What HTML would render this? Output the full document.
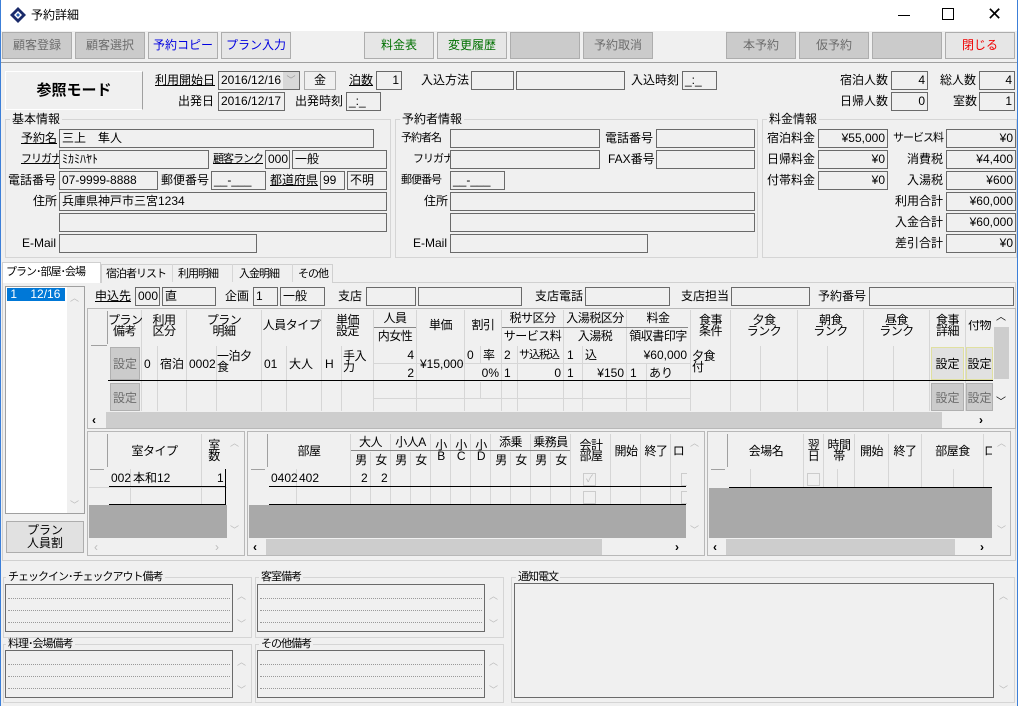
<!DOCTYPE html>
<html><head><meta charset="utf-8"><style>
*{margin:0;padding:0}
body{width:1018px;height:706px;background:#f0f0f0;position:relative;overflow:hidden;font-family:"Liberation Sans","Noto Sans CJK JP",sans-serif;font-size:12px;color:#000}
.a{position:absolute;white-space:nowrap;line-height:14px}
.i{position:absolute;box-sizing:border-box;border:1px solid #6a6a6a;background:#f0f0f0;height:19px;line-height:17px;padding:0 2px;font-size:12px;white-space:nowrap;overflow:hidden}
.r{text-align:right}
.u{text-decoration:underline}
.kn{font-size:11px;letter-spacing:-1px}
.btn{position:absolute;top:32px;height:27px;width:70px;box-sizing:border-box;border:1px solid #adadad;text-align:center;line-height:25px;font-size:12px}
.g{background:#cbcbcb;color:#6d6d6d}
.w{background:#e6e6e6}
.grp{position:absolute;box-sizing:border-box;border:1px solid #d5d5d5}
.gl{position:absolute;background:#f0f0f0;padding:0 2px;line-height:13px}
.v{position:absolute;width:1px;background:#d6d6d6}
.h{position:absolute;height:1px;background:#d6d6d6}
.k{position:absolute;height:2px;background:#000}
.t{position:absolute;text-align:center;line-height:11px;font-size:12px;white-space:nowrap;letter-spacing:-0.5px}
.set{position:absolute;box-sizing:border-box;border:1px solid #b0b0b0;background:#cbcbcb;color:#6d6d6d;text-align:center;line-height:32px}
.sb{position:absolute;background:#f0f0f0;color:#a0a0a0;text-align:center;font-size:10px}
.ta{position:absolute;box-sizing:border-box;border:1px solid #6a6a6a;background:#f0f0f0}
.dl{position:absolute;left:2px;right:2px;border-top:1px dotted #9a9a9a}
</style></head><body>
<div style="position:absolute;left:0;top:0;width:1018px;height:31px;background:#fff"></div>
<div style="position:absolute;left:0;top:0;width:1px;height:706px;background:#3c7fd8"></div>
<div style="position:absolute;left:1017px;top:0;width:1px;height:706px;background:#3c7fd8"></div>
<svg style="position:absolute;left:9px;top:6px" width="18" height="18" viewBox="0 0 18 18"><path d="M9 1L17 9L9 17L1 9Z" fill="#1a2a6a"/><path d="M9 5L13 9L9 13L5 9Z" fill="#fff"/><path d="M9 7L11 9L9 11L7 9Z" fill="#2a5fb0"/></svg>
<div class="a" style="left:31px;top:8px;font-size:12px">予約詳細</div>
<div class="a" style="left:898px;width:12px;height:1px;background:#000;top:15px"></div>
<div style="position:absolute;left:942px;top:8px;width:10px;height:10px;border:1px solid #000"></div>
<div class="a" style="left:987px;top:4px;font-size:18px;line-height:20px">✕</div>
<div class="btn g" style="left:2px">顧客登録</div>
<div class="btn g" style="left:75px">顧客選択</div>
<div class="btn w" style="left:148px;color:#0000e0">予約コピー</div>
<div class="btn w" style="left:221px;color:#0000e0">プラン入力</div>
<div class="btn w" style="left:364px;color:#007000">料金表</div>
<div class="btn w" style="left:437px;color:#007000">変更履歴</div>
<div class="btn g" style="left:510px"></div>
<div class="btn g" style="left:583px">予約取消</div>
<div class="btn g" style="left:726px">本予約</div>
<div class="btn g" style="left:799px">仮予約</div>
<div class="btn g" style="left:872px"></div>
<div class="btn w" style="left:945px;color:#f00000">閉じる</div>
<div style="position:absolute;left:1px;top:62px;width:1016px;height:1px;background:#a0a0a0"></div>
<div style="position:absolute;left:5px;top:71px;width:138px;height:39px;box-sizing:border-box;border:1px solid #fff;border-right-color:#a0a0a0;border-bottom-color:#fff;background:#f0f0f0;text-align:center;line-height:37px;font-size:15px;font-weight:bold">参照モード</div>
<div class="a u" style="left:155px;top:73px">利用開始日</div>
<div class="i" style="left:218px;top:71px;width:82px">2016/12/16</div>
<div style="position:absolute;left:283px;top:72px;width:16px;height:17px;background:#d8d8d8;color:#999;font-size:9px;text-align:center;line-height:17px">﹀</div>
<div class="i" style="left:304px;top:71px;width:32px;text-align:center;border-color:#adadad">金</div>
<div class="a u" style="left:349px;top:73px">泊数</div>
<div class="i r" style="left:376px;top:71px;width:26px">1</div>
<div class="a" style="left:421px;top:73px">入込方法</div>
<div class="i" style="left:471px;top:71px;width:43px"></div>
<div class="i" style="left:516px;top:71px;width:109px"></div>
<div class="a" style="left:631px;top:73px">入込時刻</div>
<div class="i" style="left:682px;top:71px;width:35px">_:_</div>
<div class="a" style="left:840px;top:73px">宿泊人数</div>
<div class="i r" style="left:891px;top:71px;width:37px">4</div>
<div class="a" style="left:940px;top:73px">総人数</div>
<div class="i r" style="left:979px;top:71px;width:36px">4</div>
<div class="a" style="left:178px;top:94px">出発日</div>
<div class="i" style="left:218px;top:92px;width:67px">2016/12/17</div>
<div class="a" style="left:295px;top:94px">出発時刻</div>
<div class="i" style="left:346px;top:92px;width:35px">_:_</div>
<div class="a" style="left:840px;top:94px">日帰人数</div>
<div class="i r" style="left:891px;top:92px;width:37px">0</div>
<div class="a" style="left:953px;top:94px">室数</div>
<div class="i r" style="left:979px;top:92px;width:36px">1</div>
<div class="grp" style="left:5px;top:119px;width:386px;height:139px"></div>
<div class="gl" style="left:10px;top:113px">基本情報</div>
<div class="a u" style="left:21px;top:131px">予約名</div><div class="i" style="left:59px;top:129px;width:315px">三上　隼人</div>
<div class="a u kn" style="left:21px;top:152px">フリガナ</div><div class="i" style="left:59px;top:150px;width:150px">ﾐｶﾐﾊﾔﾄ</div>
<div class="a u kn" style="left:213px;top:152px">顧客ランク</div><div class="i" style="left:265px;top:150px;width:25px">000</div><div class="i" style="left:292px;top:150px;width:95px">一般</div>
<div class="a" style="left:8px;top:173px">電話番号</div><div class="i" style="left:59px;top:171px;width:99px">07-9999-8888</div>
<div class="a" style="left:161px;top:173px">郵便番号</div><div class="i" style="left:211px;top:171px;width:55px">__-___</div>
<div class="a u" style="left:270px;top:173px">都道府県</div><div class="i" style="left:320px;top:171px;width:25px">99</div><div class="i" style="left:347px;top:171px;width:40px">不明</div>
<div class="a" style="left:33px;top:194px">住所</div><div class="i" style="left:59px;top:192px;width:328px">兵庫県神戸市三宮1234</div>
<div class="i" style="left:59px;top:213px;width:328px"></div>
<div class="a" style="left:22px;top:236px">E-Mail</div><div class="i" style="left:59px;top:234px;width:198px"></div>
<div class="grp" style="left:395px;top:119px;width:363px;height:139px"></div>
<div class="gl" style="left:400px;top:113px">予約者情報</div>
<div class="a kn" style="left:401px;top:131px">予約者名</div><div class="i" style="left:450px;top:129px;width:150px"></div>
<div class="a" style="left:605px;top:131px">電話番号</div><div class="i" style="left:656px;top:129px;width:99px"></div>
<div class="a kn" style="left:413px;top:152px">フリガナ</div><div class="i" style="left:450px;top:150px;width:150px"></div>
<div class="a" style="left:608px;top:152px">FAX番号</div><div class="i" style="left:656px;top:150px;width:99px"></div>
<div class="a kn" style="left:401px;top:173px">郵便番号</div><div class="i" style="left:450px;top:171px;width:55px">__-___</div>
<div class="a" style="left:424px;top:194px">住所</div><div class="i" style="left:450px;top:192px;width:305px"></div>
<div class="i" style="left:450px;top:213px;width:305px"></div>
<div class="a" style="left:413px;top:236px">E-Mail</div><div class="i" style="left:450px;top:234px;width:198px"></div>
<div class="grp" style="left:762px;top:119px;width:255px;height:139px"></div>
<div class="gl" style="left:767px;top:113px">料金情報</div>
<div class="a" style="left:767px;top:131px">宿泊料金</div><div class="i r" style="left:818px;top:129px;width:70px">¥55,000</div>
<div class="a kn" style="left:893px;top:131px">サービス料</div><div class="i r" style="left:946px;top:129px;width:70px">¥0</div>
<div class="a" style="left:767px;top:152px">日帰料金</div><div class="i r" style="left:818px;top:150px;width:70px">¥0</div>
<div class="a" style="left:907px;top:152px">消費税</div><div class="i r" style="left:946px;top:150px;width:70px">¥4,400</div>
<div class="a" style="left:767px;top:173px">付帯料金</div><div class="i r" style="left:818px;top:171px;width:70px">¥0</div>
<div class="a" style="left:907px;top:173px">入湯税</div><div class="i r" style="left:946px;top:171px;width:70px">¥600</div>
<div class="a" style="left:895px;top:194px">利用合計</div><div class="i r" style="left:946px;top:192px;width:70px">¥60,000</div>
<div class="a" style="left:895px;top:215px">入金合計</div><div class="i r" style="left:946px;top:213px;width:70px">¥60,000</div>
<div class="a" style="left:895px;top:236px">差引合計</div><div class="i r" style="left:946px;top:234px;width:70px">¥0</div>
<div style="position:absolute;left:2px;top:282px;width:1014px;height:279px;box-sizing:border-box;border:1px solid #d0d0d0"></div>
<div style="position:absolute;left:2px;top:262px;width:99px;height:21px;background:#fff;border:1px solid #d0d0d0;border-bottom:none;box-sizing:border-box"></div>
<div class="a kn" style="left:6px;top:265px">プラン･部屋･会場</div>
<div style="position:absolute;left:101px;top:264px;width:232px;height:19px;border:1px solid #d0d0d0;border-bottom:none;box-sizing:border-box;background:#f0f0f0"></div>
<div class="v" style="left:172px;top:264px;height:18px"></div><div class="v" style="left:232px;top:264px;height:18px"></div><div class="v" style="left:292px;top:264px;height:18px"></div>
<div class="a kn" style="left:106px;top:267px">宿泊者リスト</div>
<div class="a kn" style="left:178px;top:267px">利用明細</div>
<div class="a kn" style="left:239px;top:267px">入金明細</div>
<div class="a kn" style="left:298px;top:267px">その他</div>
<div style="position:absolute;left:5px;top:286px;width:80px;height:228px;box-sizing:border-box;border:1px solid #a0a0a0;background:#fff"></div>
<div style="position:absolute;left:7px;top:288px;width:58px;height:13px;background:#0078d7;color:#fff;line-height:13px;font-size:12px">&nbsp;1&nbsp;&nbsp;&nbsp;&nbsp;12/16</div>
<div class="sb" style="left:67px;top:287px;width:17px;height:226px"></div>
<div class="a" style="left:70px;top:291px;color:#bbb;font-size:9px">︿</div>
<div class="a" style="left:70px;top:498px;color:#bbb;font-size:9px">﹀</div>
<div style="position:absolute;left:6px;top:521px;width:78px;height:32px;box-sizing:border-box;border:1px solid #adadad;background:#e1e1e1;text-align:center;line-height:13px;padding-top:2px">プラン<br>人員割</div>
<div class="a u" style="left:95px;top:289px">申込先</div><div class="i" style="left:135px;top:287px;width:25px">000</div><div class="i" style="left:162px;top:287px;width:54px">直</div>
<div class="a" style="left:225px;top:289px">企画</div><div class="i" style="left:253px;top:287px;width:25px">1</div><div class="i" style="left:280px;top:287px;width:45px">一般</div>
<div class="a" style="left:338px;top:289px">支店</div><div class="i" style="left:366px;top:287px;width:50px"></div><div class="i" style="left:418px;top:287px;width:104px"></div>
<div class="a" style="left:535px;top:289px">支店電話</div><div class="i" style="left:585px;top:287px;width:85px"></div>
<div class="a" style="left:681px;top:289px">支店担当</div><div class="i" style="left:731px;top:287px;width:79px"></div>
<div class="a" style="left:818px;top:289px">予約番号</div><div class="i" style="left:869px;top:287px;width:145px"></div>
<div style="position:absolute;left:87px;top:308px;width:929px;height:121px;box-sizing:border-box;border:1px solid #b8b8b8;background:#f0f0f0"></div>
<div class="h" style="left:91px;top:345px;width:16px;background:#a0a0a0"></div>
<div class="v" style="left:107px;top:311px;height:33px;background:#a0a0a0"></div>
<div class="set" style="left:110px;top:347px;width:30px;height:33px">設定</div>
<div class="set" style="left:110px;top:383px;width:30px;height:28px;line-height:28px">設定</div>
<div class="set" style="left:931px;top:347px;width:33px;height:33px;color:#000;background:#e1e1e1;border-color:#e0e0a0">設定</div>
<div class="set" style="left:966px;top:347px;width:27px;height:33px;color:#000;background:#e1e1e1;border-color:#e0e0a0;overflow:hidden">設定</div>
<div class="set" style="left:931px;top:383px;width:33px;height:28px;line-height:28px">設定</div>
<div class="set" style="left:966px;top:383px;width:27px;height:28px;line-height:28px;overflow:hidden">設定</div>
<div class="v" style="left:141px;top:310px;height:101px"></div>
<div class="v" style="left:157px;top:346px;height:65px"></div>
<div class="v" style="left:186px;top:310px;height:101px"></div>
<div class="v" style="left:216px;top:346px;height:65px"></div>
<div class="v" style="left:261px;top:310px;height:101px"></div>
<div class="v" style="left:286px;top:346px;height:65px"></div>
<div class="v" style="left:321px;top:310px;height:101px"></div>
<div class="v" style="left:341px;top:346px;height:65px"></div>
<div class="v" style="left:373px;top:310px;height:101px"></div>
<div class="v" style="left:416px;top:310px;height:101px"></div>
<div class="v" style="left:464px;top:310px;height:101px"></div>
<div class="v" style="left:480px;top:346px;height:17px"></div><div class="v" style="left:480px;top:382px;height:17px"></div>
<div class="v" style="left:501px;top:310px;height:101px"></div>
<div class="v" style="left:517px;top:346px;height:65px"></div>
<div class="v" style="left:563px;top:310px;height:101px"></div>
<div class="v" style="left:582px;top:346px;height:65px"></div>
<div class="v" style="left:626px;top:310px;height:101px"></div>
<div class="v" style="left:646px;top:363px;height:48px"></div>
<div class="v" style="left:690px;top:310px;height:101px"></div>
<div class="v" style="left:730px;top:310px;height:101px"></div>
<div class="v" style="left:760px;top:346px;height:65px"></div>
<div class="v" style="left:797px;top:310px;height:101px"></div>
<div class="v" style="left:827px;top:346px;height:65px"></div>
<div class="v" style="left:863px;top:310px;height:101px"></div>
<div class="v" style="left:893px;top:346px;height:65px"></div>
<div class="v" style="left:929px;top:310px;height:101px"></div>
<div class="v" style="left:965px;top:310px;height:101px"></div>
<div class="h" style="left:374px;top:363px;width:316px"></div>
<div class="h" style="left:374px;top:398px;width:316px"></div>
<div class="h" style="left:374px;top:327px;width:42px;background:#888"></div>
<div class="h" style="left:502px;top:327px;width:186px;background:#888"></div>
<div class="k" style="left:108px;top:380px;width:885px;height:1px"></div>
<div class="t kn" style="left:108px;top:315px;width:33px">プラン<br>備考</div>
<div class="t" style="left:142px;top:315px;width:44px">利用<br>区分</div>
<div class="t kn" style="left:187px;top:315px;width:74px">プラン<br>明細</div>
<div class="t kn" style="left:262px;top:320px;width:59px">人員タイプ</div>
<div class="t" style="left:322px;top:315px;width:51px">単価<br>設定</div>
<div class="t" style="left:374px;top:313px;width:42px">人員</div>
<div class="t" style="left:374px;top:331px;width:42px">内女性</div>
<div class="t" style="left:417px;top:320px;width:47px">単価</div>
<div class="t" style="left:465px;top:320px;width:36px">割引</div>
<div class="t" style="left:502px;top:313px;width:61px">税サ区分</div>
<div class="t kn" style="left:502px;top:331px;width:61px">サービス料</div>
<div class="t kn" style="left:564px;top:313px;width:62px">入湯税区分</div>
<div class="t" style="left:564px;top:331px;width:62px">入湯税</div>
<div class="t" style="left:627px;top:313px;width:62px">料金</div>
<div class="t kn" style="left:627px;top:331px;width:62px">領収書印字</div>
<div class="t" style="left:691px;top:315px;width:39px">食事<br>条件</div>
<div class="t kn" style="left:731px;top:315px;width:66px">夕食<br>ランク</div>
<div class="t kn" style="left:798px;top:315px;width:65px">朝食<br>ランク</div>
<div class="t kn" style="left:864px;top:315px;width:65px">昼食<br>ランク</div>
<div class="t" style="left:930px;top:315px;width:35px">食事<br>詳細</div>
<div class="t" style="left:966px;top:320px;width:27px;overflow:hidden">付物</div>
<div class="a" style="left:144px;top:357px">0</div>
<div class="a" style="left:160px;top:357px">宿泊</div>
<div class="a" style="left:189px;top:357px">0002</div>
<div class="t" style="left:217px;top:351px;width:44px;text-align:left">一泊夕<br>食</div>
<div class="a" style="left:264px;top:357px">01</div>
<div class="a" style="left:289px;top:357px">大人</div>
<div class="a" style="left:325px;top:357px">H</div>
<div class="t" style="left:343px;top:351px;width:30px;text-align:left">手入<br>力</div>
<div class="a r" style="left:374px;top:348px;width:40px">4</div>
<div class="a r" style="left:374px;top:366px;width:40px">2</div>
<div class="a" style="left:420px;top:357px">¥15,000</div>
<div class="a" style="left:467px;top:348px">0</div><div class="a" style="left:483px;top:348px">率</div>
<div class="a r" style="left:465px;top:366px;width:34px">0%</div>
<div class="a" style="left:504px;top:348px">2</div><div class="a kn" style="left:519px;top:348px">サ込税込</div>
<div class="a" style="left:504px;top:366px">1</div><div class="a r" style="left:518px;top:366px;width:43px">0</div>
<div class="a" style="left:567px;top:348px">1</div><div class="a" style="left:585px;top:348px">込</div>
<div class="a" style="left:567px;top:366px">1</div><div class="a r" style="left:583px;top:366px;width:41px">¥150</div>
<div class="a r" style="left:627px;top:348px;width:60px">¥60,000</div>
<div class="a" style="left:630px;top:366px">1</div><div class="a" style="left:649px;top:366px">あり</div>
<div class="t" style="left:692px;top:351px;width:36px;text-align:left">夕食<br>付</div>
<div style="position:absolute;left:88px;top:412px;width:905px;height:16px;background:#f0f0f0"></div>
<div style="position:absolute;left:106px;top:412px;width:836px;height:16px;background:#cdcdcd"></div>
<div class="a" style="left:92px;top:413px;font-weight:bold">‹</div>
<div class="a" style="left:979px;top:413px;font-weight:bold">›</div>
<div style="position:absolute;left:993px;top:309px;width:17px;height:102px;background:#f0f0f0"></div>
<div style="position:absolute;left:994px;top:327px;width:15px;height:52px;background:#cdcdcd"></div>
<div class="a" style="left:996px;top:311px;font-size:10px">︿</div>
<div class="a" style="left:996px;top:396px;font-size:10px">﹀</div>
<div style="position:absolute;left:87px;top:431px;width:158px;height:125px;box-sizing:border-box;border:1px solid #b8b8b8;background:#f0f0f0"></div>
<div style="position:absolute;left:89px;top:505px;width:138px;height:33px;background:#a9a9a9"></div>
<div class="h" style="left:90px;top:469px;width:14px;background:#a0a0a0"></div>
<div class="v" style="left:107px;top:434px;height:33px;background:#a0a0a0"></div>
<div class="v" style="left:130px;top:469px;height:36px"></div>
<div class="v" style="left:201px;top:434px;height:71px"></div>
<div class="h" style="left:89px;top:487px;width:138px"></div>
<div class="k" style="left:109px;top:486px;width:117px;height:1px"></div>
<div class="k" style="left:109px;top:504px;width:117px;height:1px"></div>
<div style="position:absolute;left:225px;top:469px;width:1px;height:36px;background:#000"></div>
<div class="t kn" style="left:108px;top:446px;width:93px">室タイプ</div>
<div class="t" style="left:202px;top:440px;width:24px">室<br>数</div>
<div class="a" style="left:111px;top:471px">002</div><div class="a" style="left:133px;top:471px">本和12</div><div class="a" style="left:217px;top:471px">1</div>
<div class="a" style="left:230px;top:436px;color:#bbb;font-size:9px">︿</div>
<div class="a" style="left:230px;top:523px;color:#bbb;font-size:9px">﹀</div>
<div class="a" style="left:94px;top:540px;color:#bbb">‹</div><div class="a" style="left:215px;top:540px;color:#bbb">›</div>
<div style="position:absolute;left:247px;top:431px;width:458px;height:125px;box-sizing:border-box;border:1px solid #b8b8b8;background:#f0f0f0"></div>
<div style="position:absolute;left:249px;top:505px;width:437px;height:33px;background:#a9a9a9"></div>
<div style="position:absolute;left:249px;top:539px;width:454px;height:16px;background:#f0f0f0"></div>
<div style="position:absolute;left:266px;top:539px;width:336px;height:16px;background:#cdcdcd"></div>
<div class="a" style="left:253px;top:540px;font-weight:bold">‹</div><div class="a" style="left:675px;top:540px;font-weight:bold">›</div>
<div class="h" style="left:251px;top:469px;width:14px;background:#a0a0a0"></div>
<div class="v" style="left:267px;top:434px;height:33px;background:#a0a0a0"></div>
<div class="v" style="left:296px;top:469px;height:36px"></div>
<div class="v" style="left:350px;top:434px;height:71px"></div>
<div class="v" style="left:370px;top:452px;height:53px"></div>
<div class="v" style="left:390px;top:434px;height:71px"></div>
<div class="v" style="left:410px;top:452px;height:53px"></div>
<div class="v" style="left:430px;top:434px;height:71px"></div>
<div class="v" style="left:450px;top:434px;height:71px"></div>
<div class="v" style="left:470px;top:434px;height:71px"></div>
<div class="v" style="left:490px;top:434px;height:71px"></div>
<div class="v" style="left:510px;top:452px;height:53px"></div>
<div class="v" style="left:530px;top:434px;height:71px"></div>
<div class="v" style="left:550px;top:452px;height:53px"></div>
<div class="v" style="left:570px;top:434px;height:71px"></div>
<div class="v" style="left:610px;top:434px;height:71px"></div>
<div class="v" style="left:640px;top:434px;height:71px"></div>
<div class="v" style="left:670px;top:434px;height:71px"></div>
<div class="h" style="left:351px;top:450px;width:219px;background:#888"></div>
<div class="k" style="left:269px;top:486px;width:417px;height:1px"></div>
<div class="k" style="left:269px;top:504px;width:417px;height:1px"></div>
<div class="t" style="left:268px;top:446px;width:82px">部屋</div>
<div class="t" style="left:351px;top:437px;width:39px">大人</div>
<div class="t kn" style="left:391px;top:437px;width:39px">小人A</div>
<div class="t" style="left:491px;top:437px;width:39px">添乗</div>
<div class="t kn" style="left:531px;top:437px;width:39px">乗務員</div>
<div class="t" style="left:351px;top:455px;width:20px">男</div><div class="t" style="left:371px;top:455px;width:20px">女</div>
<div class="t" style="left:391px;top:455px;width:20px">男</div><div class="t" style="left:411px;top:455px;width:20px">女</div>
<div class="t" style="left:491px;top:455px;width:20px">男</div><div class="t" style="left:511px;top:455px;width:20px">女</div>
<div class="t" style="left:531px;top:455px;width:20px">男</div><div class="t" style="left:551px;top:455px;width:20px">女</div>
<div class="t" style="left:431px;top:440px;width:20px">小<br>B</div>
<div class="t" style="left:451px;top:440px;width:20px">小<br>C</div>
<div class="t" style="left:471px;top:440px;width:20px">小<br>D</div>
<div class="t" style="left:571px;top:440px;width:40px">会計<br>部屋</div>
<div class="t" style="left:611px;top:446px;width:30px">開始</div>
<div class="t" style="left:641px;top:446px;width:30px">終了</div>
<div class="t" style="left:671px;top:446px;width:15px;overflow:hidden">ロ</div>
<div class="a" style="left:271px;top:471px">0402</div><div class="a" style="left:299px;top:471px">402</div>
<div class="a" style="left:361px;top:471px">2</div><div class="a" style="left:381px;top:471px">2</div>
<div style="position:absolute;left:583px;top:473px;width:11px;height:11px;border:1px solid #ccc;color:#bbb;font-size:10px;line-height:11px;text-align:center">✓</div>
<div style="position:absolute;left:583px;top:491px;width:11px;height:11px;border:1px solid #ccc"></div>
<div style="position:absolute;left:681px;top:473px;width:5px;height:11px;border:1px solid #ccc;border-right:none"></div>
<div style="position:absolute;left:681px;top:491px;width:5px;height:11px;border:1px solid #ccc;border-right:none"></div>
<div class="a" style="left:690px;top:436px;color:#bbb;font-size:9px">︿</div>
<div class="a" style="left:690px;top:523px;color:#bbb;font-size:9px">﹀</div>
<div style="position:absolute;left:707px;top:431px;width:304px;height:125px;box-sizing:border-box;border:1px solid #b8b8b8;background:#f0f0f0"></div>
<div style="position:absolute;left:709px;top:488px;width:283px;height:50px;background:#a9a9a9"></div>
<div style="position:absolute;left:709px;top:539px;width:300px;height:16px;background:#f0f0f0"></div>
<div style="position:absolute;left:726px;top:539px;width:229px;height:16px;background:#cdcdcd"></div>
<div class="a" style="left:713px;top:540px;font-weight:bold">‹</div><div class="a" style="left:980px;top:540px;font-weight:bold">›</div>
<div class="h" style="left:711px;top:469px;width:14px;background:#a0a0a0"></div>
<div class="v" style="left:727px;top:434px;height:33px;background:#a0a0a0"></div>
<div class="v" style="left:750px;top:469px;height:19px"></div>
<div class="v" style="left:803px;top:434px;height:54px"></div>
<div class="v" style="left:823px;top:434px;height:54px"></div>
<div class="v" style="left:837px;top:469px;height:19px"></div>
<div class="v" style="left:854px;top:434px;height:54px"></div>
<div class="v" style="left:888px;top:434px;height:54px"></div>
<div class="v" style="left:921px;top:434px;height:54px"></div>
<div class="v" style="left:953px;top:469px;height:19px"></div>
<div class="v" style="left:983px;top:434px;height:54px"></div>
<div class="k" style="left:729px;top:487px;width:263px;height:1px"></div>
<div class="t" style="left:729px;top:446px;width:74px">会場名</div>
<div class="t" style="left:804px;top:440px;width:19px">翌<br>日</div>
<div class="t" style="left:824px;top:440px;width:30px">時間<br>帯</div>
<div class="t" style="left:855px;top:446px;width:33px">開始</div>
<div class="t" style="left:889px;top:446px;width:32px">終了</div>
<div class="t" style="left:922px;top:446px;width:61px">部屋食</div>
<div class="t" style="left:984px;top:446px;width:8px;overflow:hidden">ロ</div>
<div style="position:absolute;left:807px;top:473px;width:11px;height:11px;border:1px solid #ccc"></div>
<div class="a" style="left:997px;top:436px;color:#bbb;font-size:9px">︿</div>
<div class="a" style="left:997px;top:523px;color:#bbb;font-size:9px">﹀</div>
<div class="grp" style="left:3px;top:577px;width:249px;height:61px"></div>
<div class="gl kn" style="left:6px;top:571px">チェックイン･チェックアウト備考</div>
<div class="ta" style="left:5px;top:584px;width:228px;height:48px"><div class="dl" style="top:13px"></div><div class="dl" style="top:25px"></div><div class="dl" style="top:37px"></div></div>
<div class="a" style="left:237px;top:589px;color:#bbb;font-size:9px">︿</div><div class="a" style="left:237px;top:617px;color:#bbb;font-size:9px">﹀</div>
<div class="grp" style="left:255px;top:577px;width:249px;height:61px"></div>
<div class="gl kn" style="left:259px;top:571px">客室備考</div>
<div class="ta" style="left:257px;top:584px;width:228px;height:48px"><div class="dl" style="top:13px"></div><div class="dl" style="top:25px"></div><div class="dl" style="top:37px"></div></div>
<div class="a" style="left:489px;top:589px;color:#bbb;font-size:9px">︿</div><div class="a" style="left:489px;top:617px;color:#bbb;font-size:9px">﹀</div>
<div class="grp" style="left:3px;top:644px;width:249px;height:59px"></div>
<div class="gl kn" style="left:6px;top:638px">料理･会場備考</div>
<div class="ta" style="left:5px;top:650px;width:228px;height:48px"><div class="dl" style="top:13px"></div><div class="dl" style="top:25px"></div><div class="dl" style="top:37px"></div></div>
<div class="a" style="left:237px;top:655px;color:#bbb;font-size:9px">︿</div><div class="a" style="left:237px;top:683px;color:#bbb;font-size:9px">﹀</div>
<div class="grp" style="left:255px;top:644px;width:249px;height:59px"></div>
<div class="gl kn" style="left:259px;top:638px">その他備考</div>
<div class="ta" style="left:257px;top:650px;width:228px;height:48px"><div class="dl" style="top:13px"></div><div class="dl" style="top:25px"></div><div class="dl" style="top:37px"></div></div>
<div class="a" style="left:489px;top:655px;color:#bbb;font-size:9px">︿</div><div class="a" style="left:489px;top:683px;color:#bbb;font-size:9px">﹀</div>
<div class="grp" style="left:511px;top:577px;width:504px;height:126px"></div>
<div class="gl kn" style="left:516px;top:571px">通知電文</div>
<div class="ta" style="left:514px;top:583px;width:480px;height:115px"></div>
<div class="a" style="left:999px;top:589px;color:#bbb;font-size:9px">︿</div><div class="a" style="left:999px;top:683px;color:#bbb;font-size:9px">﹀</div>
</body></html>
